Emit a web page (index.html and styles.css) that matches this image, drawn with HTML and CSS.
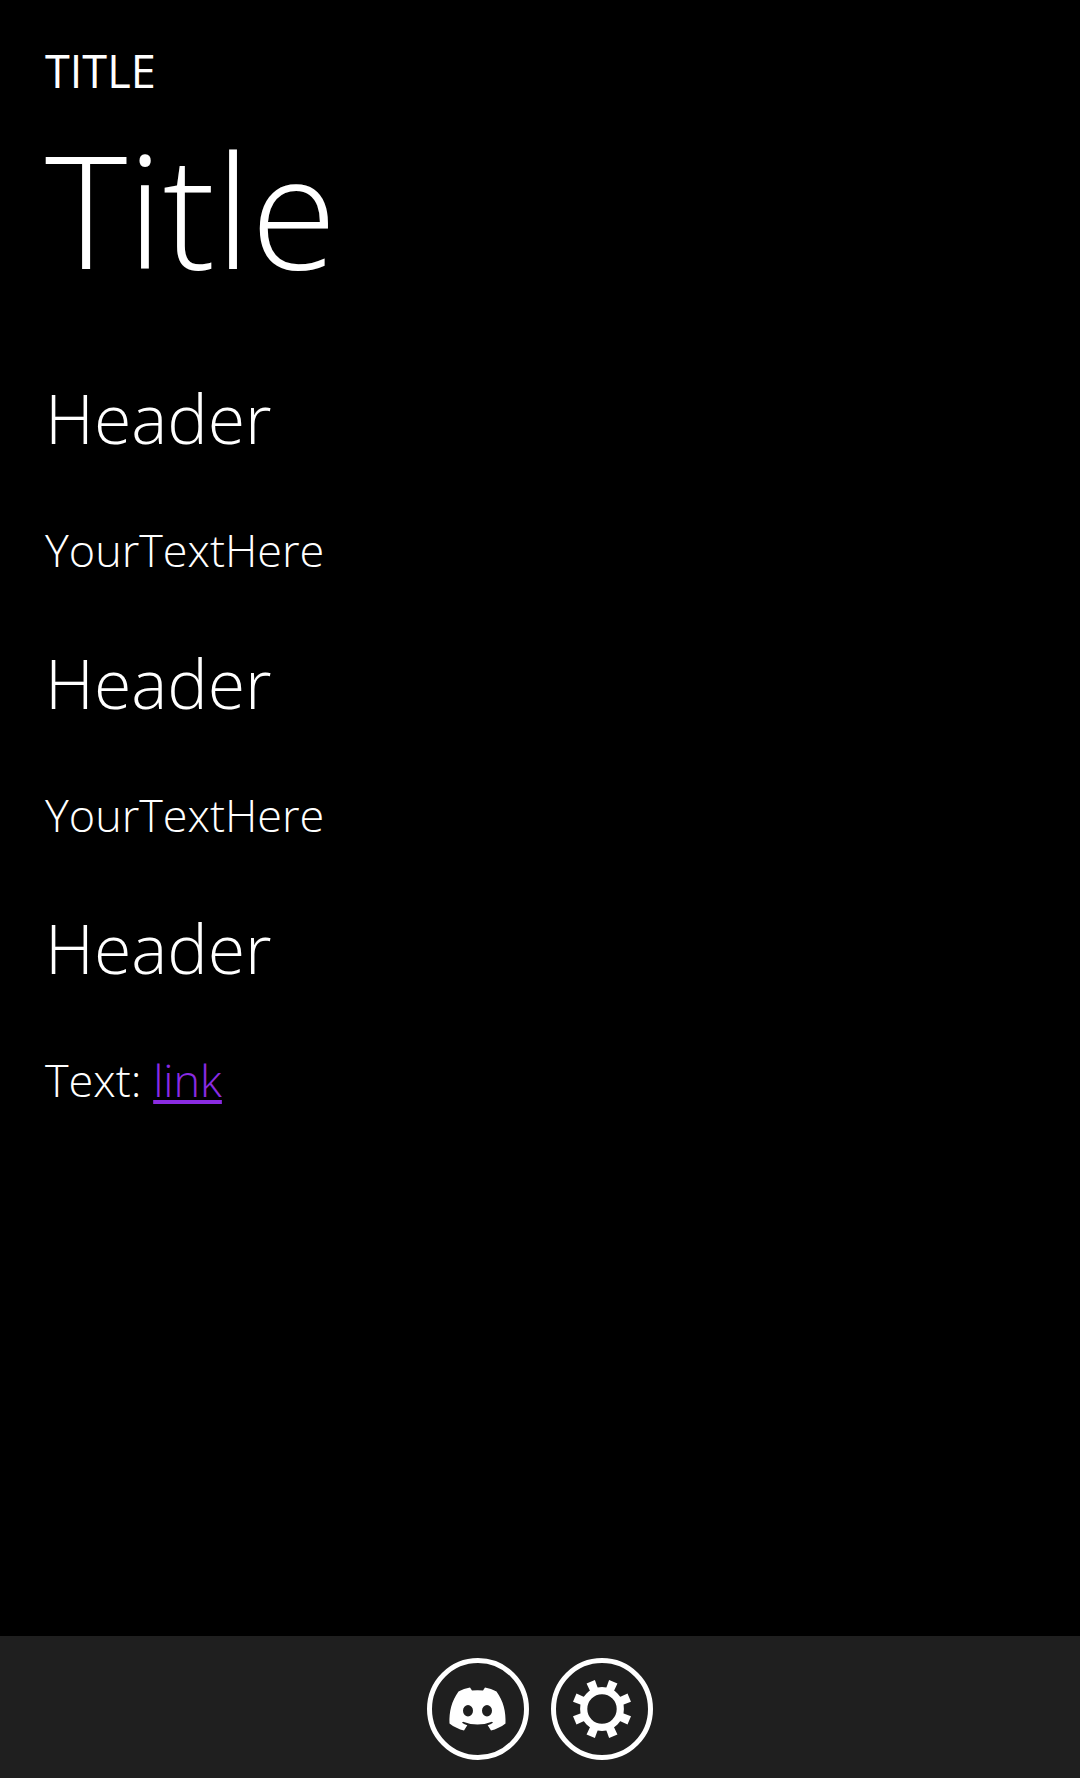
FILE: index.html
```html
<!DOCTYPE html>
<html lang="en">
<head>
<meta charset="utf-8">
<meta name="viewport" content="width=device-width, initial-scale=1">
<title>Title</title>
<link rel="stylesheet" href="styles.css">
</head>
<body>
<main class="page">
  <p class="app-name">TITLE</p>
  <h1 class="page-title">Title</h1>
  <section class="block">
    <h2 class="block-title">Header</h2>
    <p class="block-text">YourTextHere</p>
  </section>
  <section class="block">
    <h2 class="block-title">Header</h2>
    <p class="block-text">YourTextHere</p>
  </section>
  <section class="block">
    <h2 class="block-title">Header</h2>
    <p class="block-text">Text: <a class="link" href="#">link</a></p>
  </section>
</main>
<footer class="app-bar">
  <button class="round-button" type="button" aria-label="Discord">
    <svg class="icon" viewBox="0 0 102 102" aria-hidden="true">
      <path fill="#fff" fill-rule="evenodd" d="M69.500 33.500C66 31.500 62 30.300 58 29.500L56 32.500Q50.500 31.800 45 32.500L43 29.500C39 30.300 35 31.500 31.500 33.500C24.500 43 22 54 22.500 65.500C27 69 32 71.300 37 72.500L40.300 67.200Q37.500 66.200 35 64.700L36 63.700Q50.500 69.500 65 63.700L66 64.700Q63.500 66.200 60.700 67.200L64 72.500C69 71.300 74 69 78.500 65.500C79 54 76.500 43 69.500 33.500ZM41 58.500a5 5.700 0 1 1 0-11.400a5 5.700 0 0 1 0 11.400ZM60 58.500a5 5.700 0 1 1 0-11.400a5 5.700 0 0 1 0 11.400Z"/>
    </svg>
  </button>
  <button class="round-button" type="button" aria-label="Settings">
    <svg class="icon" viewBox="0 0 102 102" aria-hidden="true">
      <circle cx="51" cy="51" r="18.300" fill="none" stroke="#fff" stroke-width="7.200"/>
      <g fill="#fff">
        <path id="tooth" d="M46.500 21.500h9l-.5 12h-8z" transform="rotate(22.500 51 51)"/>
        <use href="#tooth" transform="rotate(45 51 51)"/>
        <use href="#tooth" transform="rotate(90 51 51)"/>
        <use href="#tooth" transform="rotate(135 51 51)"/>
        <use href="#tooth" transform="rotate(180 51 51)"/>
        <use href="#tooth" transform="rotate(225 51 51)"/>
        <use href="#tooth" transform="rotate(270 51 51)"/>
        <use href="#tooth" transform="rotate(315 51 51)"/>
      </g>
    </svg>
  </button>
</footer>
</body>
</html>
```
FILE: styles.css
```css
* { box-sizing: border-box; }
body {
  margin: 0;
  min-height: 100vh;
  display: flex;
  flex-direction: column;
  background: #000;
  color: #fff;
  font-family: "Open Sans", sans-serif;
  font-weight: 300;
}
.page { flex: 1; padding: 39px 45px; }
.app-name, .page-title, .block-title, .block-text { margin: 0; }
.app-name { font-size: 45px; line-height: 64px; font-weight: 500; }
.page-title { padding-bottom: 4px; font-size: 157px; line-height: 211px; font-weight: 300; }
.block { padding-top: 50px; }
.block-title { font-size: 68px; line-height: 100px; font-weight: 300; }
.block-text { padding-top: 48px; font-size: 45px; line-height: 67px; }
.link {
  color: #8a2be2;
  text-decoration-thickness: 4px;
  text-underline-offset: 3px;
  text-decoration-skip-ink: none;
}
.app-bar {
  display: flex;
  justify-content: center;
  gap: 22px;
  padding: 22px 0 18px;
  background: #1f1f1f;
}
.round-button {
  width: 102px;
  height: 102px;
  padding: 0;
  border: 5px solid #fff;
  border-radius: 50%;
  background: none;
}
.icon { display: block; margin: -5px; width: 102px; height: 102px; }
```
